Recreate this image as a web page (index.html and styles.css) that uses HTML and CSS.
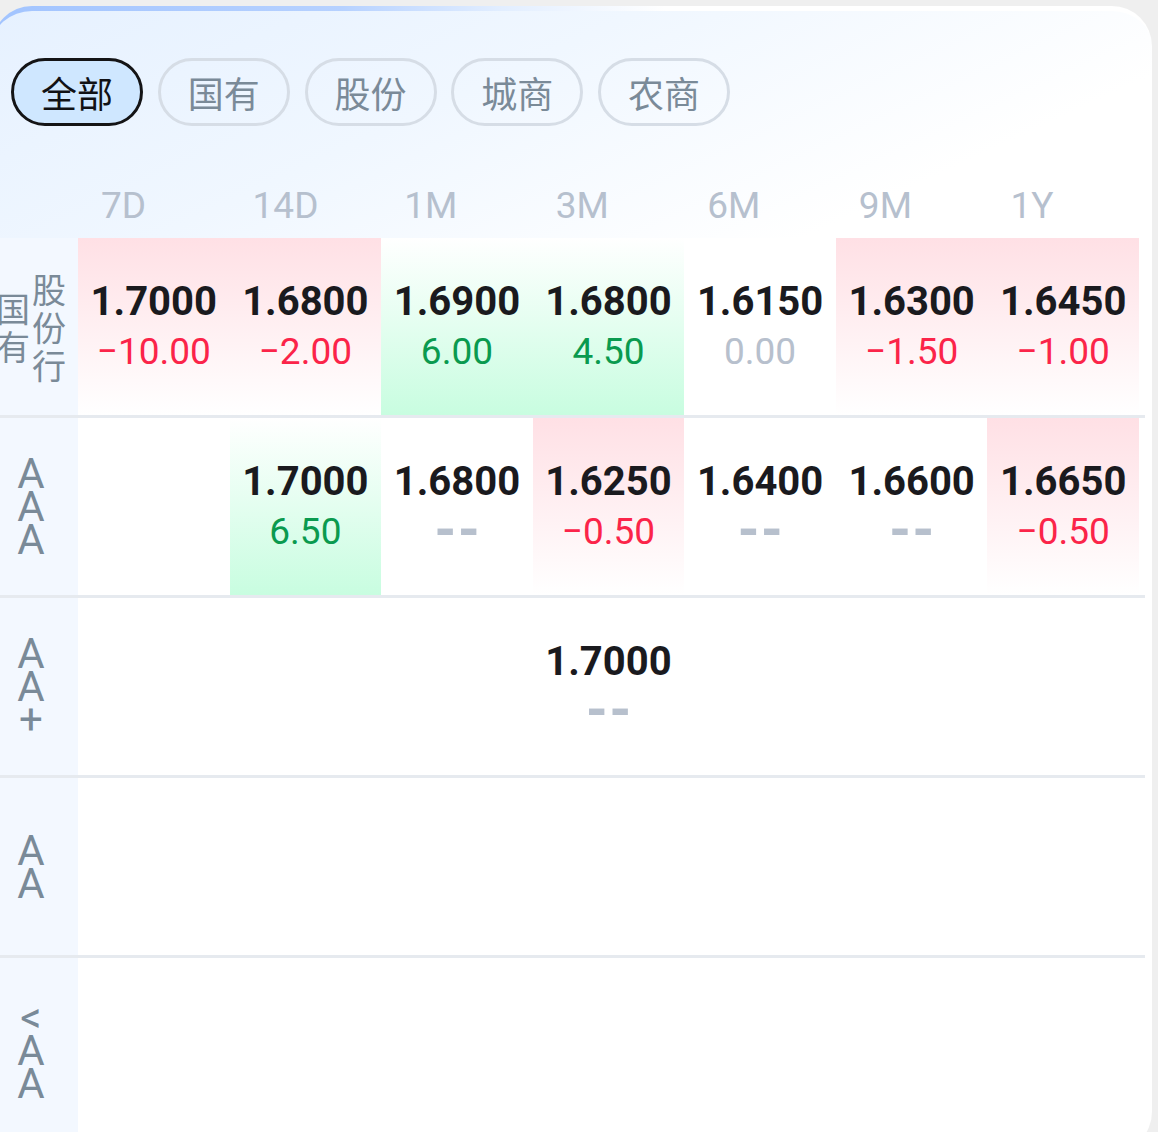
FILE: index.html
```html
<!DOCTYPE html>
<html lang="zh-CN">
<head>
<meta charset="utf-8">
<title>存单利率</title>
<link rel="stylesheet" href="styles.css">
</head>
<body>
<div class="card">
  <div class="tabs">
    <div class="tab active">全部</div>
    <div class="tab">国有</div>
    <div class="tab">股份</div>
    <div class="tab">城商</div>
    <div class="tab">农商</div>
  </div>

  <div class="grid head">
    <div></div>
    <div class="th">7D</div>
    <div class="th">14D</div>
    <div class="th">1M</div>
    <div class="th">3M</div>
    <div class="th">6M</div>
    <div class="th">9M</div>
    <div class="th">1Y</div>
    <div></div>
  </div>

  <div class="grid row">
    <div class="label"><span class="lbl-cn">国有</span><span class="lbl-cn">股份行</span></div>
    <div class="cell fall"><div class="rate">1.7000</div><div class="chg neg">−10.00</div></div>
    <div class="cell fall"><div class="rate">1.6800</div><div class="chg neg">−2.00</div></div>
    <div class="cell rise"><div class="rate">1.6900</div><div class="chg pos">6.00</div></div>
    <div class="cell rise"><div class="rate">1.6800</div><div class="chg pos">4.50</div></div>
    <div class="cell"><div class="rate">1.6150</div><div class="chg flat">0.00</div></div>
    <div class="cell fall"><div class="rate">1.6300</div><div class="chg neg">−1.50</div></div>
    <div class="cell fall"><div class="rate">1.6450</div><div class="chg neg">−1.00</div></div>
    <div></div>
  </div>

  <div class="grid row">
    <div class="label"><span class="lbl-en">AAA</span></div>
    <div class="cell"></div>
    <div class="cell rise"><div class="rate">1.7000</div><div class="chg pos">6.50</div></div>
    <div class="cell"><div class="rate">1.6800</div><div class="chg flat dash">--</div></div>
    <div class="cell fall"><div class="rate">1.6250</div><div class="chg neg">−0.50</div></div>
    <div class="cell"><div class="rate">1.6400</div><div class="chg flat dash">--</div></div>
    <div class="cell"><div class="rate">1.6600</div><div class="chg flat dash">--</div></div>
    <div class="cell fall"><div class="rate">1.6650</div><div class="chg neg">−0.50</div></div>
    <div></div>
  </div>

  <div class="grid row">
    <div class="label"><span class="lbl-en">AA+</span></div>
    <div class="cell"></div>
    <div class="cell"></div>
    <div class="cell"></div>
    <div class="cell"><div class="rate">1.7000</div><div class="chg flat dash">--</div></div>
    <div class="cell"></div>
    <div class="cell"></div>
    <div class="cell"></div>
    <div></div>
  </div>

  <div class="grid row">
    <div class="label"><span class="lbl-en">AA</span></div>
    <div class="cell"></div>
    <div class="cell"></div>
    <div class="cell"></div>
    <div class="cell"></div>
    <div class="cell"></div>
    <div class="cell"></div>
    <div class="cell"></div>
    <div></div>
  </div>

  <div class="grid row last">
    <div class="label"><span class="lbl-en">&lt;AA</span></div>
    <div class="cell"></div>
    <div class="cell"></div>
    <div class="cell"></div>
    <div class="cell"></div>
    <div class="cell"></div>
    <div class="cell"></div>
    <div class="cell"></div>
    <div></div>
  </div>
</div>
</body>
</html>
```

FILE: styles.css
```css
* {
  box-sizing: border-box;
  margin: 0;
  padding: 0;
}

html,
body {
  height: 100%;
  overflow: hidden;
}

body {
  background: #efefef;
  font-family: Roboto, "Noto Sans CJK SC", sans-serif;
}

.card {
  width: 1160px;
  margin: 6px 0 0 -8px;
  padding: 0 7px 10px 0;
  border-top: 5px solid transparent;
  border-radius: 40px;
  overflow: hidden;
  background:
    linear-gradient(155deg, #e6f1ff 0%, #f0f7ff 18%, #ffffff 36%) padding-box,
    linear-gradient(90deg, #a2c4ff 0%, #b6d1ff 30%, #e2eeff 44%, #ffffff 58%) border-box;
}

/* ---------- tabs ---------- */
.tabs {
  display: flex;
  gap: 14.75px;
  margin: 47px 0 0 19px;
}

.tab {
  height: 68px;
  padding: 0 27px;
  border: 3px solid #d6dde6;
  border-radius: 34px;
  font: 36px/62px "Noto Sans CJK SC", sans-serif;
  color: #7a8a98;
  white-space: nowrap;
}

.tab.active {
  background: #cfe7ff;
  border-color: #141416;
  color: #111114;
}

/* ---------- grid ---------- */
.grid {
  display: grid;
  grid-template-columns: 86px repeat(7, 1fr) 6px;
}

.head {
  height: 50px;
  margin: 55px 0 7px;
}

.th {
  padding-left: 23px;
  font: 37px/50px Roboto, sans-serif;
  color: #b6c0ce;
}

.row {
  height: 180px;
  border-bottom: 3px solid #e6eaef;
  background: #ffffff;
}

.row.last {
  height: 184px;
  border-bottom: 0;
}

.label {
  display: flex;
  align-items: center;
  justify-content: center;
  gap: 2px;
  padding-right: 8px;
  background: #f3f8ff;
  color: #7a8a98;
}

.lbl-cn {
  width: min-content;
  word-break: break-all;
  font: 34px/38px "Noto Sans CJK SC", sans-serif;
}

.lbl-en {
  width: min-content;
  word-break: break-all;
  text-align: center;
  font: 42px/33px Roboto, sans-serif;
}

.cell {
  display: flex;
  flex-direction: column;
  align-items: center;
  justify-content: center;
}

.cell.fall {
  background: linear-gradient(180deg, #ffe0e5 0%, #ffffff 100%);
}

.cell.rise {
  background: linear-gradient(180deg, #ffffff 0%, #c8fde0 100%);
}

.rate {
  font: 700 40px/50px Roboto, sans-serif;
  color: #1a1a1e;
}

.chg {
  font: 37px/50px Roboto, sans-serif;
}

.neg {
  color: #fb2449;
}

.pos {
  color: #0a9a4f;
}

.flat {
  color: #b7c0cd;
}

.dash {
  font: 700 54px/50px "Liberation Mono", monospace;
  letter-spacing: -9px;
  text-indent: -9px;
}
```
